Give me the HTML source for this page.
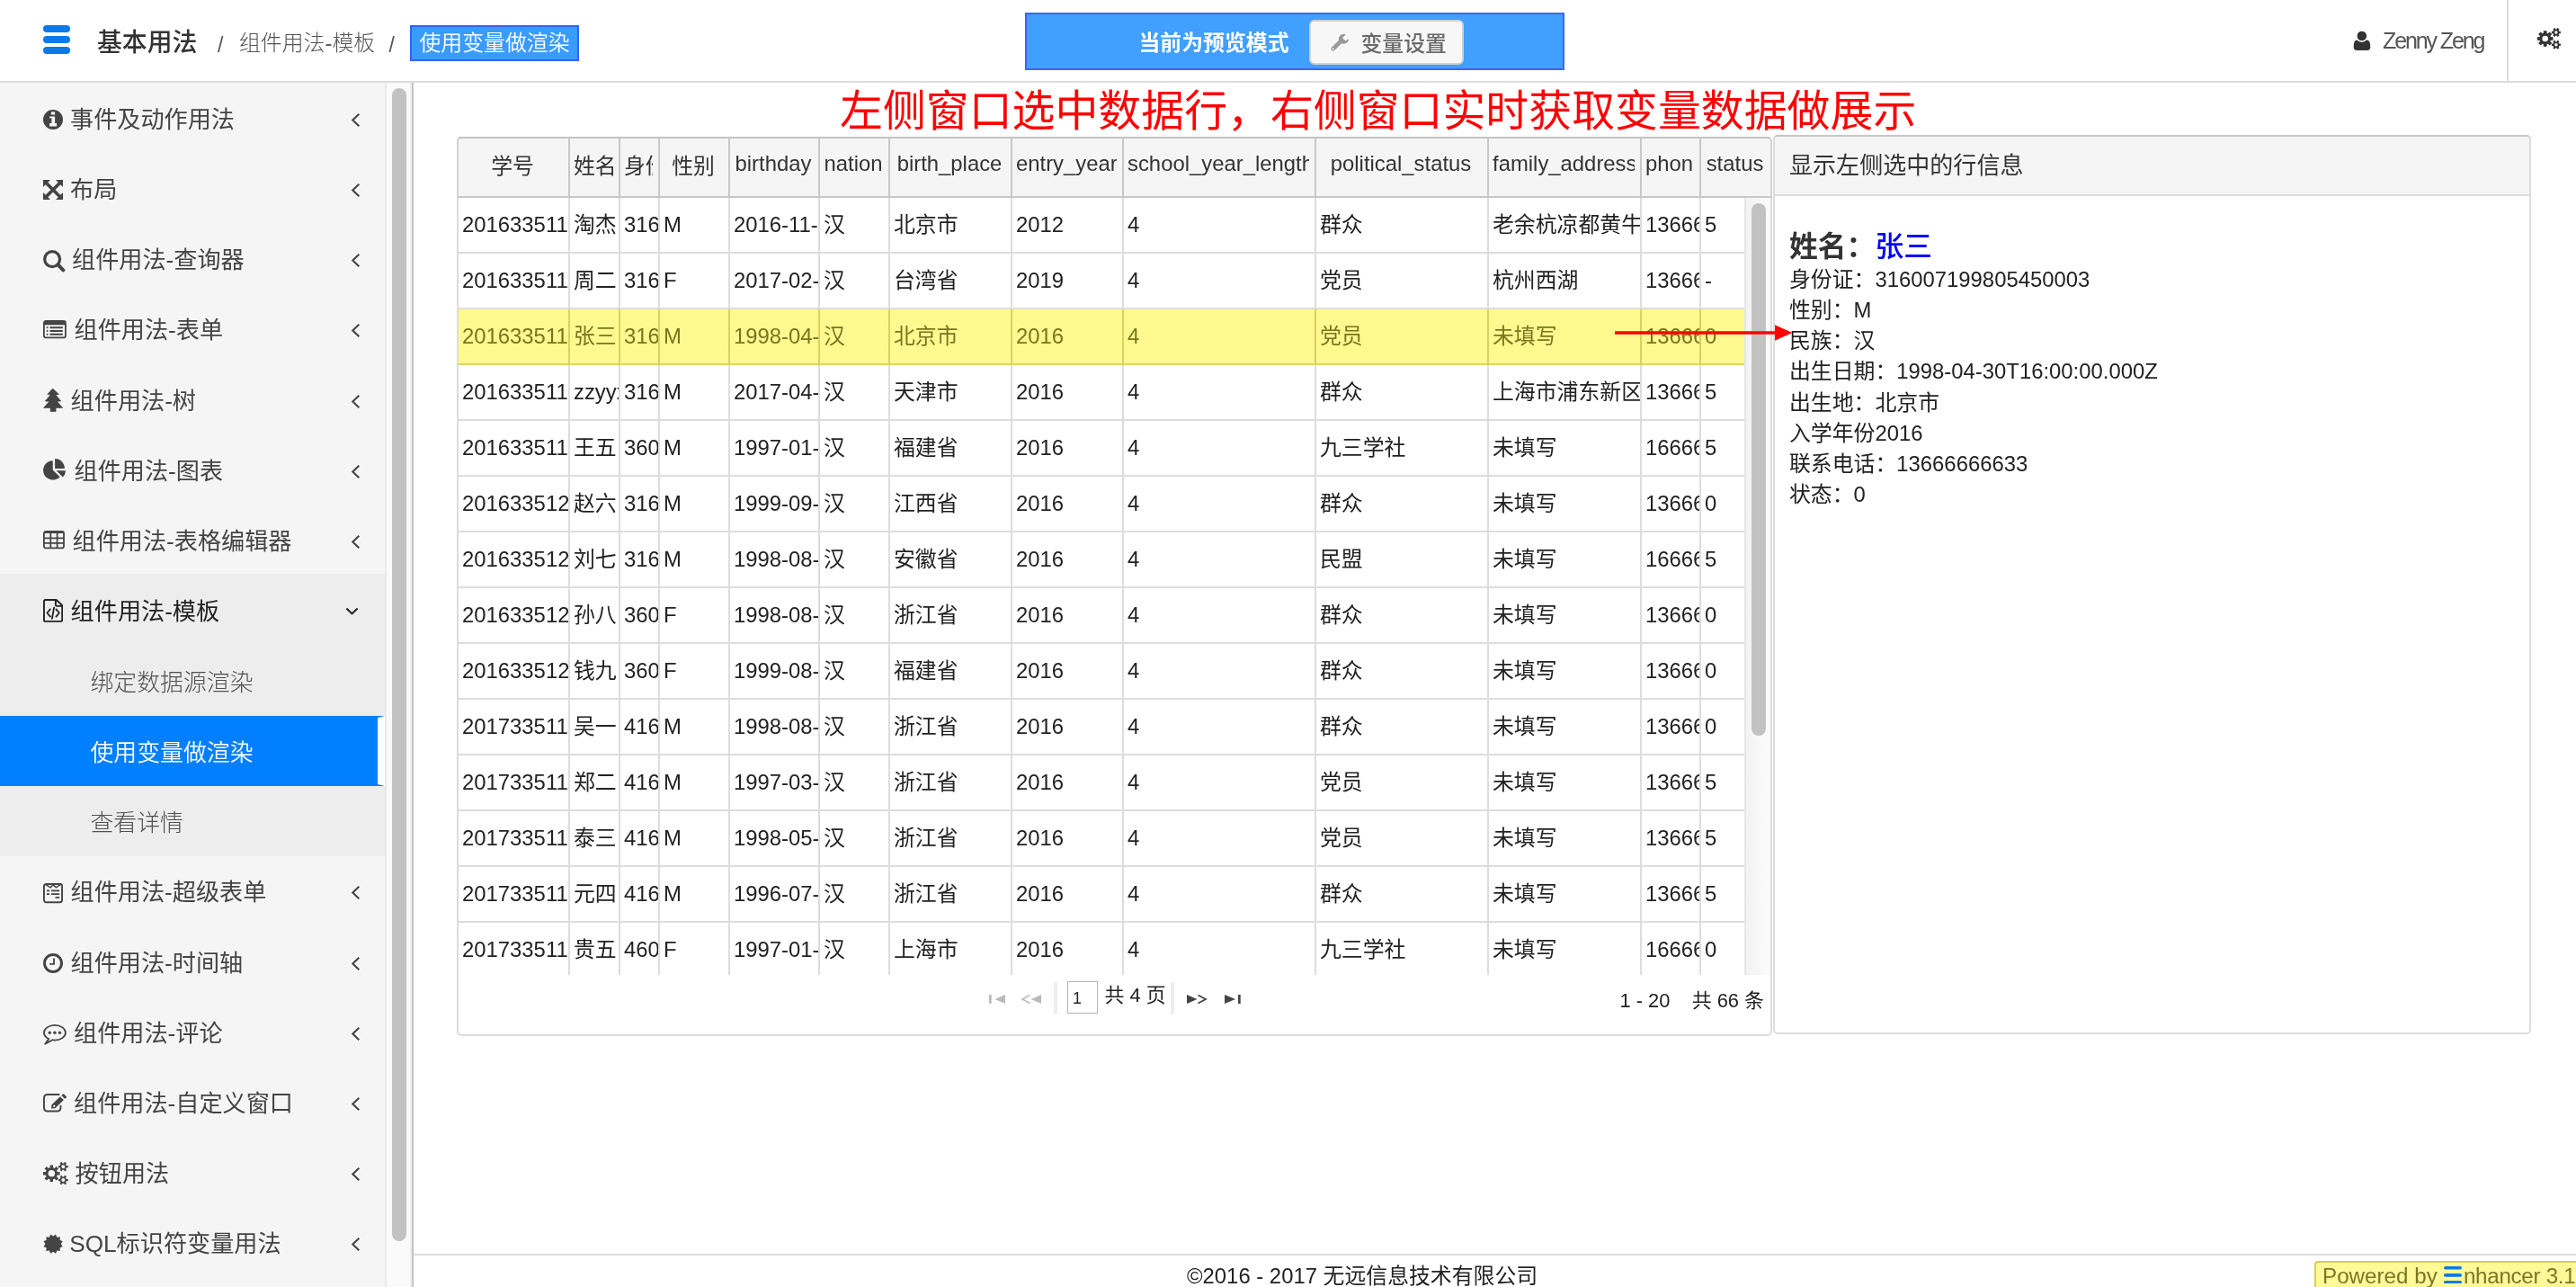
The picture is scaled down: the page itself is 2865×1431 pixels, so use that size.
<!DOCTYPE html>
<html lang="zh-CN"><head><meta charset="utf-8"><title>使用变量做渲染</title>
<style>
*{box-sizing:border-box}
html,body{margin:0;padding:0}
html{width:2865px;height:1431px;overflow:hidden}
body{width:2865px;height:1431px;overflow:hidden;background:#fff;position:relative;will-change:transform;font-family:"Liberation Sans","Noto Sans CJK SC",sans-serif;font-size:23.87px;color:#333}
div,span,i,svg{position:absolute}
i{display:block}
/* header */
#hd{left:0;top:0;width:2865px;height:92px;border-bottom:2px solid #dcdcdc;background:#fff}
.bar{left:48px;width:30px;height:8px;border-radius:4px;background:#0b7ae6}
#t1{left:108px;top:27.5px;height:40px;line-height:40px;font-size:27.85px;font-weight:500;color:#333;white-space:nowrap}
.sl{top:29.5px;height:40px;line-height:40px;color:#555;font-size:23px}
#t2{left:266px;top:28px;height:40px;line-height:40px;font-weight:300;color:#555;white-space:nowrap}
#t3{left:456px;top:28px;width:188px;height:40px;line-height:36px;border:2px solid #3560fd;background:#3a9bff;color:#fff;text-align:center;font-weight:350;white-space:nowrap}
#t3 span{position:static}
#pv{left:1140px;top:14px;width:600px;height:64px;border:2px solid #3a66fb;background:#409fff}
#pvt{left:124.5px;top:12px;height:40px;line-height:40px;font-weight:700;color:#fff;white-space:nowrap}
#pvb{left:314px;top:6px;width:172px;height:50px;border:2px solid #cfcfcf;border-radius:6px;background:#f7f7f7}
#pvb span{left:55.5px;top:4.5px;height:40px;line-height:40px;color:#6a6a6a;font-weight:500;white-space:nowrap}
#un{left:2650px;top:24.5px;height:40px;line-height:40px;font-size:25px;letter-spacing:-2.1px;color:#555;white-space:nowrap}
#dv{left:2788px;top:0;width:2px;height:90px;background:#ddd}
/* sidebar */
#sb{left:0;top:92px;width:428px;height:1339px;background:#f5f5f5;overflow:hidden}
#sbl{left:428px;top:92px;width:2px;height:1339px;background:#e9e9e9}
#trk{left:430px;top:92px;width:28px;height:1339px;background:#fafafa;border-right:2px solid #eee}
#thm{left:436px;top:98px;width:16px;height:1282px;border-radius:8px;background:#c1c2c1}
#sbb{left:458px;top:92px;width:2px;height:1339px;background:#c4c4c4}
.mi{left:0;width:428px;height:78.2px}
.ic{left:48px}
.mt{top:20px;height:40px;line-height:40px;font-size:26.15px;margin-left:-1px;color:#444;white-space:nowrap}
.act .mt{color:#222}
.chev{left:390px}
#subbg{left:0;top:545.8px;width:428px;height:314px;background:#ededed}
.sub{left:0;width:428px;height:78.2px}
.sub span{left:100.5px;top:21px;height:40px;line-height:40px;font-size:25.86px;font-weight:300;color:#505050;white-space:nowrap}
.sub.cur{background:#007fff;border-right:8px solid #fff;border-top:2px solid #007fff;border-bottom:2px solid #007fff}
.sub.cur span{top:19px}
.sub.cur span{color:#fff;font-weight:350}
/* heading */
#h1{left:934px;top:94px;height:60px;line-height:60px;font-size:47.9px;color:#f00;white-space:nowrap}
/* table panel */
#tp{left:508px;top:152px;width:1463px;height:1000px;border:2px solid #ddd;border-top-color:#c8c8c8;border-radius:5px;background:#fff}
#thd{left:-2px;top:-2px;width:1463px;height:68px;background:#f5f5f5;border:2px solid #d4d4d4;border-top-color:#c4c4c4;border-bottom-color:#c8c8c8;border-radius:5px 5px 0 0;overflow:hidden}
.th{top:-2px;height:66px;overflow:hidden}
.th span{left:4px;right:6px;top:5px;height:50px;line-height:50px;text-align:center;white-space:nowrap;overflow:hidden;color:#333}
.th span.cj{top:8px}
.hs{top:-2px;width:2px;height:66px;background:#c8c8c8}
#tbd{left:0;top:66px;width:1430px;height:864px;overflow:hidden}
.tr{left:0;width:1430px;height:62px;border-bottom:2px solid #ddd}
.td{top:0;height:60px;line-height:60px;padding-left:4px;white-space:nowrap;overflow:hidden;color:#222}
.vs{top:0;width:2px;height:62px;background:#ddd}
.tr.sel{background:#fff98f;border-bottom-color:#ddd56a}
.tr.sel .td{color:#79751f}
.tr.sel .vs{background:#d9d160}
#vtr{left:1430px;top:66px;width:29px;height:864px;background:linear-gradient(90deg,#f2f2f2,#fcfcfc);border-left:2px solid #e6e6e6}
#vth{left:1437.5px;top:72px;width:16px;height:591.5px;border-radius:8px;background:#c1c2c1}
#pg{left:1px;top:930px;width:1459px;height:65px}
.pt{height:40px;line-height:40px;white-space:nowrap;color:#222;font-size:21.9px}
.sp{top:8px;width:4px;height:36px;background:#eee}
#pin{left:676px;top:7px;width:34px;height:36px;border:1px solid #b4b4b4;background:#fff}
#pin span{left:5px;top:3px;height:30px;line-height:30px;font-size:18px;color:#222}
/* right panel */
#rp{left:1972px;top:150px;width:843px;height:1000px;border:2px solid #ddd;border-radius:5px;background:#fff}
#rph{left:-2px;top:-2px;width:843px;height:68px;background:#f5f5f5;border:2px solid #ddd;border-top-color:#c8c8c8;border-radius:5px 5px 0 0}
#rph span{left:16px;top:7px;height:50px;line-height:50px;font-size:26.05px;color:#333;white-space:nowrap}
#nm{left:16px;top:98px;height:48px;line-height:48px;font-size:31.8px;font-weight:700;color:#333;white-space:nowrap}
#nm b{color:#00f;font-weight:500}
.ln{left:16px;height:34.1px;line-height:34.1px;white-space:nowrap;color:#222}
/* footer */
#ft{left:460px;top:1394px;width:2405px;height:37px;border-top:2px solid #ddd;background:#fff;overflow:hidden}
#cp{left:860px;top:5px;height:36px;line-height:36px;white-space:nowrap;color:#222}
#pw{left:2114px;top:6.4px;width:300px;height:40px;border:2px solid #d6cd52;border-radius:4px 0 0 0;background:#fff998;color:#7c7727;white-space:nowrap;font-size:24.2px}
#pw span{left:7px;top:0;height:29px;line-height:29px}
</style></head><body>
<div id="hd">
<i class="bar" style="top:28px"></i><i class="bar" style="top:40px"></i><i class="bar" style="top:52px"></i>
<span id="t1">基本用法</span><span class="sl" style="left:242px">/</span><span id="t2">组件用法-模板</span><span class="sl" style="left:432.5px">/</span>
<div id="t3"><span>使用变量做渲染</span></div>
<div id="pv"><span id="pvt">当前为预览模式</span>
<div id="pvb"><svg style="left:21px;top:13px" width="23" height="21" viewBox="0 0 23 21"><path d="M3.6 17.4L12.2 8.8" stroke="#999" stroke-width="4.6" stroke-linecap="round"/><path d="M17.8 1.2A5.6 5.6 0 1 0 21 6.4L17.4 8.2L14 5.2Z" fill="#999"/><circle cx="3.5" cy="17.5" r="1" fill="#f7f7f7"/></svg><span>变量设置</span></div></div>
<svg style="left:2617px;top:34px" width="20" height="23" viewBox="0 0 20 23"><circle cx="9.8" cy="6" r="5.4" fill="#333"/><path d="M0.7 18.5Q0.7 10.3 4.4 10.5Q9.8 15 15.2 10.5Q19.3 10.3 19.3 18.5Q19.3 21.9 15.5 21.9H4.5Q0.7 21.9 0.7 18.5Z" fill="#333"/><circle cx="9.8" cy="6" r="5.9" fill="none" stroke="#fff" stroke-width="1"/><circle cx="9.8" cy="6" r="4.9" fill="#333"/></svg>
<span id="un">Zenny Zeng</span><i id="dv"></i>
<svg style="left:2822px;top:31.4px" width="27" height="25" viewBox="0 0 27 25"><circle cx="8.7" cy="12" r="4.90" fill="none" stroke="#333" stroke-width="3.20"/><rect x="6.80" y="3.20" width="3.80" height="2.90" fill="#333" transform="rotate(0.0 8.7 12)"/><rect x="6.80" y="3.20" width="3.80" height="2.90" fill="#333" transform="rotate(45.0 8.7 12)"/><rect x="6.80" y="3.20" width="3.80" height="2.90" fill="#333" transform="rotate(90.0 8.7 12)"/><rect x="6.80" y="3.20" width="3.80" height="2.90" fill="#333" transform="rotate(135.0 8.7 12)"/><rect x="6.80" y="3.20" width="3.80" height="2.90" fill="#333" transform="rotate(180.0 8.7 12)"/><rect x="6.80" y="3.20" width="3.80" height="2.90" fill="#333" transform="rotate(225.0 8.7 12)"/><rect x="6.80" y="3.20" width="3.80" height="2.90" fill="#333" transform="rotate(270.0 8.7 12)"/><rect x="6.80" y="3.20" width="3.80" height="2.90" fill="#333" transform="rotate(315.0 8.7 12)"/><circle cx="20.9" cy="5" r="2.55" fill="none" stroke="#333" stroke-width="1.70"/><rect x="19.65" y="0.00" width="2.50" height="2.20" fill="#333" transform="rotate(30.0 20.9 5)"/><rect x="19.65" y="0.00" width="2.50" height="2.20" fill="#333" transform="rotate(90.0 20.9 5)"/><rect x="19.65" y="0.00" width="2.50" height="2.20" fill="#333" transform="rotate(150.0 20.9 5)"/><rect x="19.65" y="0.00" width="2.50" height="2.20" fill="#333" transform="rotate(210.0 20.9 5)"/><rect x="19.65" y="0.00" width="2.50" height="2.20" fill="#333" transform="rotate(270.0 20.9 5)"/><rect x="19.65" y="0.00" width="2.50" height="2.20" fill="#333" transform="rotate(330.0 20.9 5)"/><circle cx="20.9" cy="18.8" r="2.55" fill="none" stroke="#333" stroke-width="1.70"/><rect x="19.65" y="13.80" width="2.50" height="2.20" fill="#333" transform="rotate(30.0 20.9 18.8)"/><rect x="19.65" y="13.80" width="2.50" height="2.20" fill="#333" transform="rotate(90.0 20.9 18.8)"/><rect x="19.65" y="13.80" width="2.50" height="2.20" fill="#333" transform="rotate(150.0 20.9 18.8)"/><rect x="19.65" y="13.80" width="2.50" height="2.20" fill="#333" transform="rotate(210.0 20.9 18.8)"/><rect x="19.65" y="13.80" width="2.50" height="2.20" fill="#333" transform="rotate(270.0 20.9 18.8)"/><rect x="19.65" y="13.80" width="2.50" height="2.20" fill="#333" transform="rotate(330.0 20.9 18.8)"/></svg>
</div>
<div id="sb"><i id="subbg"></i>
<div class="mi" style="top:1.0px"><svg class="ic" style="top:28.70px" width="22" height="22" viewBox="0 0 22 22"><circle cx="11" cy="11" r="11" fill="#444"/><rect x="8.9" y="2.4" width="4.2" height="3.1" fill="#f5f5f5"/><path d="M7.1 7.4H13.1V14.9H15.1V18.4H7.1V14.9H9.4V9.3H7.1Z" fill="#f5f5f5"/></svg><span class="mt" style="left:79px">事件及动作用法</span><svg class="chev" style="top:32.0px" width="11" height="17" viewBox="0 0 11 17"><path d="M9.3 1.7L2.3 8.5L9.3 15.3" fill="none" stroke="#444" stroke-width="2.1"/></svg></div>
<div class="mi" style="top:79.12px"><svg class="ic" style="top:28.58px" width="22" height="22" viewBox="0 0 22 22"><path d="M0 0H8L0 8ZM22 0V8L14 0ZM0 22V14L8 22ZM22 22H14L22 14Z" fill="#444"/><path d="M3 3L19 19M19 3L3 19" stroke="#444" stroke-width="3.8"/></svg><span class="mt" style="left:79px">布局</span><svg class="chev" style="top:32.0px" width="11" height="17" viewBox="0 0 11 17"><path d="M9.3 1.7L2.3 8.5L9.3 15.3" fill="none" stroke="#444" stroke-width="2.1"/></svg></div>
<div class="mi" style="top:157.25px"><svg class="ic" style="top:28.45px" width="25" height="25" viewBox="0 0 25 25"><circle cx="10.1" cy="10.1" r="8.45" fill="none" stroke="#444" stroke-width="3.3"/><path d="M16.6 16.5L22.3 22.3" stroke="#444" stroke-width="4" stroke-linecap="round"/></svg><span class="mt" style="left:81px">组件用法-查询器</span><svg class="chev" style="top:32.0px" width="11" height="17" viewBox="0 0 11 17"><path d="M9.3 1.7L2.3 8.5L9.3 15.3" fill="none" stroke="#444" stroke-width="2.1"/></svg></div>
<div class="mi" style="top:235.38px"><svg class="ic" style="top:28.32px" width="26" height="21" viewBox="0 0 26 21"><rect x="0.9" y="0.9" width="24" height="18.5" rx="2.2" fill="none" stroke="#444" stroke-width="1.8"/><rect x="0.9" y="0.9" width="24" height="4.4" fill="#444"/><circle cx="4.6" cy="8.3" r="1.05" fill="#444"/><rect x="7.3" y="7.3500000000000005" width="14.7" height="1.9" rx="0.9" fill="#444"/><circle cx="4.6" cy="12.0" r="1.05" fill="#444"/><rect x="7.3" y="11.05" width="14.7" height="1.9" rx="0.9" fill="#444"/><circle cx="4.6" cy="15.7" r="1.05" fill="#444"/><rect x="7.3" y="14.75" width="14.7" height="1.9" rx="0.9" fill="#444"/></svg><span class="mt" style="left:83.5px">组件用法-表单</span><svg class="chev" style="top:32.0px" width="11" height="17" viewBox="0 0 11 17"><path d="M9.3 1.7L2.3 8.5L9.3 15.3" fill="none" stroke="#444" stroke-width="2.1"/></svg></div>
<div class="mi" style="top:313.5px"><svg class="ic" style="top:26.40px" width="22" height="26" viewBox="0 0 22 26"><path d="M10.6 0L17.5 6.5L14 7.1L19.8 13.9L15.6 14.4L21.7 21.5H14.1V25.8H8.1V21.5H0.5L6.7 14.4L2.2 13.9L8.2 7.1L4.7 6.5Z" fill="#444" stroke="#444" stroke-width="0.6" stroke-linejoin="round"/></svg><span class="mt" style="left:79.6px">组件用法-树</span><svg class="chev" style="top:32.0px" width="11" height="17" viewBox="0 0 11 17"><path d="M9.3 1.7L2.3 8.5L9.3 15.3" fill="none" stroke="#444" stroke-width="2.1"/></svg></div>
<div class="mi" style="top:391.62px"><svg class="ic" style="top:26.28px" width="26" height="25" viewBox="0 0 26 25"><path d="M10.7 2.2V12.4L18.6 20.2A10.7 10.7 0 1 1 10.7 2.2Z" fill="#444"/><path d="M13.1 10.9V0A10.8 10.8 0 0 1 23.9 10.9Z" fill="#444"/><path d="M14.6 13.2H24.9A10.3 10.3 0 0 1 21.7 20.6Z" fill="#444"/></svg><span class="mt" style="left:83.5px">组件用法-图表</span><svg class="chev" style="top:32.0px" width="11" height="17" viewBox="0 0 11 17"><path d="M9.3 1.7L2.3 8.5L9.3 15.3" fill="none" stroke="#444" stroke-width="2.1"/></svg></div>
<div class="mi" style="top:469.75px"><svg class="ic" style="top:27.95px" width="24" height="21" viewBox="0 0 24 21"><rect x="0.9" y="0.9" width="22.1" height="18.5" rx="2.2" fill="none" stroke="#444" stroke-width="1.8"/><rect x="0.9" y="0.9" width="22.1" height="2.1" fill="#444"/><path d="M8.3 2V19.5M15.6 2V19.5M1 8.3H23M1 13.8H23" stroke="#444" stroke-width="1.8"/></svg><span class="mt" style="left:81.5px">组件用法-表格编辑器</span><svg class="chev" style="top:32.0px" width="11" height="17" viewBox="0 0 11 17"><path d="M9.3 1.7L2.3 8.5L9.3 15.3" fill="none" stroke="#444" stroke-width="2.1"/></svg></div>
<div class="mi act" style="top:547.88px"><svg class="ic" style="top:26.02px" width="22" height="26" viewBox="0 0 22 26"><path d="M2.4 0.95H14.6L21.2 7V23.4Q21.2 24.9 19.7 24.9H2.4Q0.95 24.9 0.95 23.4V2.4Q0.95 0.95 2.4 0.95Z" fill="none" stroke="#222" stroke-width="1.9"/><path d="M13.9 1V6.4Q13.9 7.9 15.4 7.9H21.2" fill="none" stroke="#222" stroke-width="1.9"/><path d="M7.9 11.4L4.4 15.5L7.9 19.6M12.1 9.6L9.9 21.8M14.4 11.4L17.9 15.5L14.4 19.6" fill="none" stroke="#222" stroke-width="1.8" stroke-linecap="round" stroke-linejoin="round"/></svg><span class="mt" style="left:79.6px">组件用法-模板</span><svg class="chev" style="top:35.1px;left:384px" width="15" height="9" viewBox="0 0 15 9"><path d="M1.4 1.6L7.5 7.4L13.6 1.6" fill="none" stroke="#222" stroke-width="2.1"/></svg></div>
<div class="sub" style="top:626.00px"><span>绑定数据源渲染</span></div>
<div class="sub cur" style="top:703.8px"><span>使用变量做渲染</span></div>
<div class="sub" style="top:782.25px"><span>查看详情</span></div>
<div class="mi" style="top:860.38px"><svg class="ic" style="top:29.22px" width="22" height="23" viewBox="0 0 22 23"><rect x="0.95" y="0.95" width="20.1" height="20.3" rx="2.4" fill="none" stroke="#444" stroke-width="1.9"/><path d="M2.2 1.2L8 4.8L11.15 1.9L14.4 4.8L19.8 1.2" fill="none" stroke="#444" stroke-width="1.5"/><path d="M3.9 8.4H7.1M9 8.4H18.2M3.9 12.2H7.1M9 12.2H18.2M13.5 15.9H18.2" stroke="#444" stroke-width="1.8"/></svg><span class="mt" style="left:79.5px">组件用法-超级表单</span><svg class="chev" style="top:32.0px" width="11" height="17" viewBox="0 0 11 17"><path d="M9.3 1.7L2.3 8.5L9.3 15.3" fill="none" stroke="#444" stroke-width="2.1"/></svg></div>
<div class="mi" style="top:938.5px"><svg class="ic" style="top:29.25px" width="22" height="22" viewBox="0 0 22 22"><circle cx="11" cy="11" r="9.5" fill="none" stroke="#444" stroke-width="3"/><path d="M12 5.6V11.8H7.2" fill="none" stroke="#444" stroke-width="1.8"/></svg><span class="mt" style="left:79.5px">组件用法-时间轴</span><svg class="chev" style="top:32.0px" width="11" height="17" viewBox="0 0 11 17"><path d="M9.3 1.7L2.3 8.5L9.3 15.3" fill="none" stroke="#444" stroke-width="2.1"/></svg></div>
<div class="mi" style="top:1016.6199999999999px"><svg class="ic" style="top:30.88px" width="26" height="23" viewBox="0 0 26 23"><ellipse cx="12.9" cy="9.25" rx="12" ry="8.3" fill="none" stroke="#444" stroke-width="1.8"/><path d="M6.6 15.6L2.2 21.8L10.9 16.9" fill="#f5f5f5" stroke="#444" stroke-width="1.8" stroke-linejoin="round"/><path d="M7.3 15.6L9.6 16.6" stroke="#f5f5f5" stroke-width="2.1"/><circle cx="7.3" cy="9.25" r="1.7" fill="#444"/><circle cx="12.9" cy="9.25" r="1.7" fill="#444"/><circle cx="18.5" cy="9.25" r="1.7" fill="#444"/></svg><span class="mt" style="left:83px">组件用法-评论</span><svg class="chev" style="top:32.0px" width="11" height="17" viewBox="0 0 11 17"><path d="M9.3 1.7L2.3 8.5L9.3 15.3" fill="none" stroke="#444" stroke-width="2.1"/></svg></div>
<div class="mi" style="top:1094.75px"><svg class="ic" style="top:28.85px" width="27" height="21" viewBox="0 0 27 21"><path d="M17.6 0.95H5Q0.95 0.95 0.95 5V15.4Q0.95 19.45 5 19.45H15.4Q19.45 19.45 19.45 15.4V13.6" fill="none" stroke="#444" stroke-width="1.9" stroke-linecap="round"/><path d="M9.1 16.4L9.3 12.4L18.9 3.2L22.9 6.9L13.4 16.3Z" fill="#444"/><path d="M20.3 2L22 0.4Q22.5 0 23 0.4L25.9 3.2Q26.3 3.7 25.9 4.2L24.2 5.7Z" fill="#444"/><rect x="11.2" y="12.8" width="2" height="2" fill="#f5f5f5" transform="rotate(45 12.2 13.8)"/></svg><span class="mt" style="left:83px">组件用法-自定义窗口</span><svg class="chev" style="top:32.0px" width="11" height="17" viewBox="0 0 11 17"><path d="M9.3 1.7L2.3 8.5L9.3 15.3" fill="none" stroke="#444" stroke-width="2.1"/></svg></div>
<div class="mi" style="top:1172.88px"><svg class="ic" style="top:27.12px" width="28" height="26" viewBox="0 0 28 26"><circle cx="9.3" cy="12.8" r="5.30" fill="none" stroke="#444" stroke-width="3.00"/><rect x="7.60" y="3.50" width="3.40" height="3.10" fill="#444" transform="rotate(0.0 9.3 12.8)"/><rect x="7.60" y="3.50" width="3.40" height="3.10" fill="#444" transform="rotate(45.0 9.3 12.8)"/><rect x="7.60" y="3.50" width="3.40" height="3.10" fill="#444" transform="rotate(90.0 9.3 12.8)"/><rect x="7.60" y="3.50" width="3.40" height="3.10" fill="#444" transform="rotate(135.0 9.3 12.8)"/><rect x="7.60" y="3.50" width="3.40" height="3.10" fill="#444" transform="rotate(180.0 9.3 12.8)"/><rect x="7.60" y="3.50" width="3.40" height="3.10" fill="#444" transform="rotate(225.0 9.3 12.8)"/><rect x="7.60" y="3.50" width="3.40" height="3.10" fill="#444" transform="rotate(270.0 9.3 12.8)"/><rect x="7.60" y="3.50" width="3.40" height="3.10" fill="#444" transform="rotate(315.0 9.3 12.8)"/><circle cx="22.3" cy="5.2" r="2.80" fill="none" stroke="#444" stroke-width="1.60"/><rect x="21.15" y="-0.20" width="2.30" height="2.40" fill="#444" transform="rotate(30.0 22.3 5.2)"/><rect x="21.15" y="-0.20" width="2.30" height="2.40" fill="#444" transform="rotate(90.0 22.3 5.2)"/><rect x="21.15" y="-0.20" width="2.30" height="2.40" fill="#444" transform="rotate(150.0 22.3 5.2)"/><rect x="21.15" y="-0.20" width="2.30" height="2.40" fill="#444" transform="rotate(210.0 22.3 5.2)"/><rect x="21.15" y="-0.20" width="2.30" height="2.40" fill="#444" transform="rotate(270.0 22.3 5.2)"/><rect x="21.15" y="-0.20" width="2.30" height="2.40" fill="#444" transform="rotate(330.0 22.3 5.2)"/><circle cx="22.3" cy="20.1" r="2.80" fill="none" stroke="#444" stroke-width="1.60"/><rect x="21.15" y="14.70" width="2.30" height="2.40" fill="#444" transform="rotate(30.0 22.3 20.1)"/><rect x="21.15" y="14.70" width="2.30" height="2.40" fill="#444" transform="rotate(90.0 22.3 20.1)"/><rect x="21.15" y="14.70" width="2.30" height="2.40" fill="#444" transform="rotate(150.0 22.3 20.1)"/><rect x="21.15" y="14.70" width="2.30" height="2.40" fill="#444" transform="rotate(210.0 22.3 20.1)"/><rect x="21.15" y="14.70" width="2.30" height="2.40" fill="#444" transform="rotate(270.0 22.3 20.1)"/><rect x="21.15" y="14.70" width="2.30" height="2.40" fill="#444" transform="rotate(330.0 22.3 20.1)"/></svg><span class="mt" style="left:84.6px">按钮用法</span><svg class="chev" style="top:32.0px" width="11" height="17" viewBox="0 0 11 17"><path d="M9.3 1.7L2.3 8.5L9.3 15.3" fill="none" stroke="#444" stroke-width="2.1"/></svg></div>
<div class="mi" style="top:1251.0px"><svg class="ic" style="top:28.70px" width="23" height="23" viewBox="0 0 23 23"><polygon points="13.95,0.47 15.40,3.65 18.88,3.32 18.55,6.80 21.73,8.25 19.70,11.10 21.73,13.95 18.55,15.40 18.88,18.88 15.40,18.55 13.95,21.73 11.10,19.70 8.25,21.73 6.80,18.55 3.32,18.88 3.65,15.40 0.47,13.95 2.50,11.10 0.47,8.25 3.65,6.80 3.32,3.32 6.80,3.65 8.25,0.47 11.10,2.50" fill="#444"/></svg><span class="mt" style="left:78.3px">SQL标识符变量用法</span><svg class="chev" style="top:32.0px" width="11" height="17" viewBox="0 0 11 17"><path d="M9.3 1.7L2.3 8.5L9.3 15.3" fill="none" stroke="#444" stroke-width="2.1"/></svg></div>
</div>
<i id="sbl"></i><i id="trk"></i><i id="thm"></i><i id="sbb"></i>
<div id="h1">左侧窗口选中数据行，右侧窗口实时获取变量数据做展示</div>
<div id="tp">
<div id="thd"><div class="th" style="left:0px;width:122px"><span class="cj">学号</span></div><div class="th" style="left:124px;width:54px"><span class="cj">姓名</span></div><div class="th" style="left:180px;width:42px"><span class="cj">身份证号</span></div><div class="th" style="left:224px;width:76px"><span class="cj">性别</span></div><div class="th" style="left:302px;width:98px"><span>birthday</span></div><div class="th" style="left:402px;width:76px"><span>nation</span></div><div class="th" style="left:480px;width:134px"><span>birth_place</span></div><div class="th" style="left:616px;width:122px"><span>entry_year</span></div><div class="th" style="left:740px;width:212px"><span>school_year_length</span></div><div class="th" style="left:954px;width:190px"><span>political_status</span></div><div class="th" style="left:1146px;width:168px"><span>family_address</span></div><div class="th" style="left:1316px;width:64px"><span>phone</span></div><div class="th" style="left:1382px;width:77px"><span>status</span></div><i class="hs" style="left:122px"></i><i class="hs" style="left:178px"></i><i class="hs" style="left:222px"></i><i class="hs" style="left:300px"></i><i class="hs" style="left:400px"></i><i class="hs" style="left:478px"></i><i class="hs" style="left:614px"></i><i class="hs" style="left:738px"></i><i class="hs" style="left:952px"></i><i class="hs" style="left:1144px"></i><i class="hs" style="left:1314px"></i><i class="hs" style="left:1380px"></i></div>
<div id="tbd"><div class="tr" style="top:0px"><div class="td" style="left:0px;width:122px">2016335110</div><div class="td" style="left:124px;width:54px">淘杰</div><div class="td" style="left:180px;width:42px">316007199805450001</div><div class="td" style="left:224px;width:76px">M</div><div class="td" style="left:302px;width:98px">2016-11-29T16:00</div><div class="td" style="left:402px;width:76px">汉</div><div class="td" style="left:480px;width:134px">北京市</div><div class="td" style="left:616px;width:122px">2012</div><div class="td" style="left:740px;width:212px">4</div><div class="td" style="left:954px;width:190px">群众</div><div class="td" style="left:1146px;width:168px">老余杭凉都黄牛肉</div><div class="td" style="left:1316px;width:64px">13666666631</div><div class="td" style="left:1382px;width:48px">5</div><i class="vs" style="left:122px"></i><i class="vs" style="left:178px"></i><i class="vs" style="left:222px"></i><i class="vs" style="left:300px"></i><i class="vs" style="left:400px"></i><i class="vs" style="left:478px"></i><i class="vs" style="left:614px"></i><i class="vs" style="left:738px"></i><i class="vs" style="left:952px"></i><i class="vs" style="left:1144px"></i><i class="vs" style="left:1314px"></i><i class="vs" style="left:1380px"></i></div><div class="tr" style="top:62px"><div class="td" style="left:0px;width:122px">2016335111</div><div class="td" style="left:124px;width:54px">周二</div><div class="td" style="left:180px;width:42px">316007199805450002</div><div class="td" style="left:224px;width:76px">F</div><div class="td" style="left:302px;width:98px">2017-02-19T16:00</div><div class="td" style="left:402px;width:76px">汉</div><div class="td" style="left:480px;width:134px">台湾省</div><div class="td" style="left:616px;width:122px">2019</div><div class="td" style="left:740px;width:212px">4</div><div class="td" style="left:954px;width:190px">党员</div><div class="td" style="left:1146px;width:168px">杭州西湖</div><div class="td" style="left:1316px;width:64px">13666666632</div><div class="td" style="left:1382px;width:48px">-</div><i class="vs" style="left:122px"></i><i class="vs" style="left:178px"></i><i class="vs" style="left:222px"></i><i class="vs" style="left:300px"></i><i class="vs" style="left:400px"></i><i class="vs" style="left:478px"></i><i class="vs" style="left:614px"></i><i class="vs" style="left:738px"></i><i class="vs" style="left:952px"></i><i class="vs" style="left:1144px"></i><i class="vs" style="left:1314px"></i><i class="vs" style="left:1380px"></i></div><div class="tr sel" style="top:124px"><div class="td" style="left:0px;width:122px">2016335112</div><div class="td" style="left:124px;width:54px">张三</div><div class="td" style="left:180px;width:42px">316007199805450003</div><div class="td" style="left:224px;width:76px">M</div><div class="td" style="left:302px;width:98px">1998-04-30T16:00</div><div class="td" style="left:402px;width:76px">汉</div><div class="td" style="left:480px;width:134px">北京市</div><div class="td" style="left:616px;width:122px">2016</div><div class="td" style="left:740px;width:212px">4</div><div class="td" style="left:954px;width:190px">党员</div><div class="td" style="left:1146px;width:168px">未填写</div><div class="td" style="left:1316px;width:64px">13666666633</div><div class="td" style="left:1382px;width:48px">0</div><i class="vs" style="left:122px"></i><i class="vs" style="left:178px"></i><i class="vs" style="left:222px"></i><i class="vs" style="left:300px"></i><i class="vs" style="left:400px"></i><i class="vs" style="left:478px"></i><i class="vs" style="left:614px"></i><i class="vs" style="left:738px"></i><i class="vs" style="left:952px"></i><i class="vs" style="left:1144px"></i><i class="vs" style="left:1314px"></i><i class="vs" style="left:1380px"></i></div><div class="tr" style="top:186px"><div class="td" style="left:0px;width:122px">2016335113</div><div class="td" style="left:124px;width:54px">zzyyx</div><div class="td" style="left:180px;width:42px">316007199805450004</div><div class="td" style="left:224px;width:76px">M</div><div class="td" style="left:302px;width:98px">2017-04-04T16:00</div><div class="td" style="left:402px;width:76px">汉</div><div class="td" style="left:480px;width:134px">天津市</div><div class="td" style="left:616px;width:122px">2016</div><div class="td" style="left:740px;width:212px">4</div><div class="td" style="left:954px;width:190px">群众</div><div class="td" style="left:1146px;width:168px">上海市浦东新区上</div><div class="td" style="left:1316px;width:64px">13666666634</div><div class="td" style="left:1382px;width:48px">5</div><i class="vs" style="left:122px"></i><i class="vs" style="left:178px"></i><i class="vs" style="left:222px"></i><i class="vs" style="left:300px"></i><i class="vs" style="left:400px"></i><i class="vs" style="left:478px"></i><i class="vs" style="left:614px"></i><i class="vs" style="left:738px"></i><i class="vs" style="left:952px"></i><i class="vs" style="left:1144px"></i><i class="vs" style="left:1314px"></i><i class="vs" style="left:1380px"></i></div><div class="tr" style="top:248px"><div class="td" style="left:0px;width:122px">2016335114</div><div class="td" style="left:124px;width:54px">王五</div><div class="td" style="left:180px;width:42px">360007199805450005</div><div class="td" style="left:224px;width:76px">M</div><div class="td" style="left:302px;width:98px">1997-01-30T16:00</div><div class="td" style="left:402px;width:76px">汉</div><div class="td" style="left:480px;width:134px">福建省</div><div class="td" style="left:616px;width:122px">2016</div><div class="td" style="left:740px;width:212px">4</div><div class="td" style="left:954px;width:190px">九三学社</div><div class="td" style="left:1146px;width:168px">未填写</div><div class="td" style="left:1316px;width:64px">16666666635</div><div class="td" style="left:1382px;width:48px">5</div><i class="vs" style="left:122px"></i><i class="vs" style="left:178px"></i><i class="vs" style="left:222px"></i><i class="vs" style="left:300px"></i><i class="vs" style="left:400px"></i><i class="vs" style="left:478px"></i><i class="vs" style="left:614px"></i><i class="vs" style="left:738px"></i><i class="vs" style="left:952px"></i><i class="vs" style="left:1144px"></i><i class="vs" style="left:1314px"></i><i class="vs" style="left:1380px"></i></div><div class="tr" style="top:310px"><div class="td" style="left:0px;width:122px">2016335120</div><div class="td" style="left:124px;width:54px">赵六</div><div class="td" style="left:180px;width:42px">316007199805450006</div><div class="td" style="left:224px;width:76px">M</div><div class="td" style="left:302px;width:98px">1999-09-30T16:00</div><div class="td" style="left:402px;width:76px">汉</div><div class="td" style="left:480px;width:134px">江西省</div><div class="td" style="left:616px;width:122px">2016</div><div class="td" style="left:740px;width:212px">4</div><div class="td" style="left:954px;width:190px">群众</div><div class="td" style="left:1146px;width:168px">未填写</div><div class="td" style="left:1316px;width:64px">13666666636</div><div class="td" style="left:1382px;width:48px">0</div><i class="vs" style="left:122px"></i><i class="vs" style="left:178px"></i><i class="vs" style="left:222px"></i><i class="vs" style="left:300px"></i><i class="vs" style="left:400px"></i><i class="vs" style="left:478px"></i><i class="vs" style="left:614px"></i><i class="vs" style="left:738px"></i><i class="vs" style="left:952px"></i><i class="vs" style="left:1144px"></i><i class="vs" style="left:1314px"></i><i class="vs" style="left:1380px"></i></div><div class="tr" style="top:372px"><div class="td" style="left:0px;width:122px">2016335121</div><div class="td" style="left:124px;width:54px">刘七</div><div class="td" style="left:180px;width:42px">316007199805450007</div><div class="td" style="left:224px;width:76px">M</div><div class="td" style="left:302px;width:98px">1998-08-30T16:00</div><div class="td" style="left:402px;width:76px">汉</div><div class="td" style="left:480px;width:134px">安徽省</div><div class="td" style="left:616px;width:122px">2016</div><div class="td" style="left:740px;width:212px">4</div><div class="td" style="left:954px;width:190px">民盟</div><div class="td" style="left:1146px;width:168px">未填写</div><div class="td" style="left:1316px;width:64px">16666666637</div><div class="td" style="left:1382px;width:48px">5</div><i class="vs" style="left:122px"></i><i class="vs" style="left:178px"></i><i class="vs" style="left:222px"></i><i class="vs" style="left:300px"></i><i class="vs" style="left:400px"></i><i class="vs" style="left:478px"></i><i class="vs" style="left:614px"></i><i class="vs" style="left:738px"></i><i class="vs" style="left:952px"></i><i class="vs" style="left:1144px"></i><i class="vs" style="left:1314px"></i><i class="vs" style="left:1380px"></i></div><div class="tr" style="top:434px"><div class="td" style="left:0px;width:122px">2016335122</div><div class="td" style="left:124px;width:54px">孙八</div><div class="td" style="left:180px;width:42px">360007199805450008</div><div class="td" style="left:224px;width:76px">F</div><div class="td" style="left:302px;width:98px">1998-08-30T16:00</div><div class="td" style="left:402px;width:76px">汉</div><div class="td" style="left:480px;width:134px">浙江省</div><div class="td" style="left:616px;width:122px">2016</div><div class="td" style="left:740px;width:212px">4</div><div class="td" style="left:954px;width:190px">群众</div><div class="td" style="left:1146px;width:168px">未填写</div><div class="td" style="left:1316px;width:64px">13666666638</div><div class="td" style="left:1382px;width:48px">0</div><i class="vs" style="left:122px"></i><i class="vs" style="left:178px"></i><i class="vs" style="left:222px"></i><i class="vs" style="left:300px"></i><i class="vs" style="left:400px"></i><i class="vs" style="left:478px"></i><i class="vs" style="left:614px"></i><i class="vs" style="left:738px"></i><i class="vs" style="left:952px"></i><i class="vs" style="left:1144px"></i><i class="vs" style="left:1314px"></i><i class="vs" style="left:1380px"></i></div><div class="tr" style="top:496px"><div class="td" style="left:0px;width:122px">2016335123</div><div class="td" style="left:124px;width:54px">钱九</div><div class="td" style="left:180px;width:42px">360007199805450009</div><div class="td" style="left:224px;width:76px">F</div><div class="td" style="left:302px;width:98px">1999-08-30T16:00</div><div class="td" style="left:402px;width:76px">汉</div><div class="td" style="left:480px;width:134px">福建省</div><div class="td" style="left:616px;width:122px">2016</div><div class="td" style="left:740px;width:212px">4</div><div class="td" style="left:954px;width:190px">群众</div><div class="td" style="left:1146px;width:168px">未填写</div><div class="td" style="left:1316px;width:64px">13666666639</div><div class="td" style="left:1382px;width:48px">0</div><i class="vs" style="left:122px"></i><i class="vs" style="left:178px"></i><i class="vs" style="left:222px"></i><i class="vs" style="left:300px"></i><i class="vs" style="left:400px"></i><i class="vs" style="left:478px"></i><i class="vs" style="left:614px"></i><i class="vs" style="left:738px"></i><i class="vs" style="left:952px"></i><i class="vs" style="left:1144px"></i><i class="vs" style="left:1314px"></i><i class="vs" style="left:1380px"></i></div><div class="tr" style="top:558px"><div class="td" style="left:0px;width:122px">2017335110</div><div class="td" style="left:124px;width:54px">吴一</div><div class="td" style="left:180px;width:42px">416007199805450010</div><div class="td" style="left:224px;width:76px">M</div><div class="td" style="left:302px;width:98px">1998-08-30T16:00</div><div class="td" style="left:402px;width:76px">汉</div><div class="td" style="left:480px;width:134px">浙江省</div><div class="td" style="left:616px;width:122px">2016</div><div class="td" style="left:740px;width:212px">4</div><div class="td" style="left:954px;width:190px">群众</div><div class="td" style="left:1146px;width:168px">未填写</div><div class="td" style="left:1316px;width:64px">13666666640</div><div class="td" style="left:1382px;width:48px">0</div><i class="vs" style="left:122px"></i><i class="vs" style="left:178px"></i><i class="vs" style="left:222px"></i><i class="vs" style="left:300px"></i><i class="vs" style="left:400px"></i><i class="vs" style="left:478px"></i><i class="vs" style="left:614px"></i><i class="vs" style="left:738px"></i><i class="vs" style="left:952px"></i><i class="vs" style="left:1144px"></i><i class="vs" style="left:1314px"></i><i class="vs" style="left:1380px"></i></div><div class="tr" style="top:620px"><div class="td" style="left:0px;width:122px">2017335111</div><div class="td" style="left:124px;width:54px">郑二</div><div class="td" style="left:180px;width:42px">416007199805450011</div><div class="td" style="left:224px;width:76px">M</div><div class="td" style="left:302px;width:98px">1997-03-30T16:00</div><div class="td" style="left:402px;width:76px">汉</div><div class="td" style="left:480px;width:134px">浙江省</div><div class="td" style="left:616px;width:122px">2016</div><div class="td" style="left:740px;width:212px">4</div><div class="td" style="left:954px;width:190px">党员</div><div class="td" style="left:1146px;width:168px">未填写</div><div class="td" style="left:1316px;width:64px">13666666641</div><div class="td" style="left:1382px;width:48px">5</div><i class="vs" style="left:122px"></i><i class="vs" style="left:178px"></i><i class="vs" style="left:222px"></i><i class="vs" style="left:300px"></i><i class="vs" style="left:400px"></i><i class="vs" style="left:478px"></i><i class="vs" style="left:614px"></i><i class="vs" style="left:738px"></i><i class="vs" style="left:952px"></i><i class="vs" style="left:1144px"></i><i class="vs" style="left:1314px"></i><i class="vs" style="left:1380px"></i></div><div class="tr" style="top:682px"><div class="td" style="left:0px;width:122px">2017335112</div><div class="td" style="left:124px;width:54px">泰三</div><div class="td" style="left:180px;width:42px">416007199805450012</div><div class="td" style="left:224px;width:76px">M</div><div class="td" style="left:302px;width:98px">1998-05-30T16:00</div><div class="td" style="left:402px;width:76px">汉</div><div class="td" style="left:480px;width:134px">浙江省</div><div class="td" style="left:616px;width:122px">2016</div><div class="td" style="left:740px;width:212px">4</div><div class="td" style="left:954px;width:190px">党员</div><div class="td" style="left:1146px;width:168px">未填写</div><div class="td" style="left:1316px;width:64px">13666666642</div><div class="td" style="left:1382px;width:48px">5</div><i class="vs" style="left:122px"></i><i class="vs" style="left:178px"></i><i class="vs" style="left:222px"></i><i class="vs" style="left:300px"></i><i class="vs" style="left:400px"></i><i class="vs" style="left:478px"></i><i class="vs" style="left:614px"></i><i class="vs" style="left:738px"></i><i class="vs" style="left:952px"></i><i class="vs" style="left:1144px"></i><i class="vs" style="left:1314px"></i><i class="vs" style="left:1380px"></i></div><div class="tr" style="top:744px"><div class="td" style="left:0px;width:122px">2017335113</div><div class="td" style="left:124px;width:54px">元四</div><div class="td" style="left:180px;width:42px">416007199805450013</div><div class="td" style="left:224px;width:76px">M</div><div class="td" style="left:302px;width:98px">1996-07-30T16:00</div><div class="td" style="left:402px;width:76px">汉</div><div class="td" style="left:480px;width:134px">浙江省</div><div class="td" style="left:616px;width:122px">2016</div><div class="td" style="left:740px;width:212px">4</div><div class="td" style="left:954px;width:190px">群众</div><div class="td" style="left:1146px;width:168px">未填写</div><div class="td" style="left:1316px;width:64px">13666666643</div><div class="td" style="left:1382px;width:48px">5</div><i class="vs" style="left:122px"></i><i class="vs" style="left:178px"></i><i class="vs" style="left:222px"></i><i class="vs" style="left:300px"></i><i class="vs" style="left:400px"></i><i class="vs" style="left:478px"></i><i class="vs" style="left:614px"></i><i class="vs" style="left:738px"></i><i class="vs" style="left:952px"></i><i class="vs" style="left:1144px"></i><i class="vs" style="left:1314px"></i><i class="vs" style="left:1380px"></i></div><div class="tr" style="top:806px"><div class="td" style="left:0px;width:122px">2017335114</div><div class="td" style="left:124px;width:54px">贵五</div><div class="td" style="left:180px;width:42px">460007199805450014</div><div class="td" style="left:224px;width:76px">F</div><div class="td" style="left:302px;width:98px">1997-01-30T16:00</div><div class="td" style="left:402px;width:76px">汉</div><div class="td" style="left:480px;width:134px">上海市</div><div class="td" style="left:616px;width:122px">2016</div><div class="td" style="left:740px;width:212px">4</div><div class="td" style="left:954px;width:190px">九三学社</div><div class="td" style="left:1146px;width:168px">未填写</div><div class="td" style="left:1316px;width:64px">16666666644</div><div class="td" style="left:1382px;width:48px">0</div><i class="vs" style="left:122px"></i><i class="vs" style="left:178px"></i><i class="vs" style="left:222px"></i><i class="vs" style="left:300px"></i><i class="vs" style="left:400px"></i><i class="vs" style="left:478px"></i><i class="vs" style="left:614px"></i><i class="vs" style="left:738px"></i><i class="vs" style="left:952px"></i><i class="vs" style="left:1144px"></i><i class="vs" style="left:1314px"></i><i class="vs" style="left:1380px"></i></div></div>
<i id="vtr"></i><i id="vth"></i>
<div id="pg">
<svg style="left:588px;top:21px" width="22" height="12" viewBox="0 0 22 12"><rect x="0.9" y="1" width="2.8" height="10" fill="#bbb"/><path d="M19 1V11L7.3 6Z" fill="#bbb"/></svg>
<svg style="left:624px;top:21px" width="24" height="12" viewBox="0 0 24 12"><path d="M10.5 1.5L2 6L10.5 10.5" fill="none" stroke="#bbb" stroke-width="1.6"/><path d="M23 1V11L11.5 6Z" fill="#bbb"/></svg>
<i class="sp" style="left:661px"></i>
<div id="pin"><span>1</span></div>
<span class="pt" style="left:717.5px;top:2.5px">共 4 页</span>
<i class="sp" style="left:791px"></i>
<svg style="left:808px;top:21px" width="24" height="12" viewBox="0 0 24 12"><path d="M1 1V11L12.5 6Z" fill="#444"/><path d="M13.5 1.5L22 6L13.5 10.5" fill="none" stroke="#444" stroke-width="1.8"/></svg>
<svg style="left:850px;top:21px" width="22" height="12" viewBox="0 0 22 12"><path d="M1 1V11L13 6Z" fill="#444"/><rect x="16" y="1" width="2.7" height="10" fill="#444"/></svg>
<span class="pt" style="right:8px;top:9px">1 - 20&nbsp;&nbsp;&nbsp;&nbsp;共 66 条</span>
</div>
</div>
<div id="rp"><div id="rph"><span>显示左侧选中的行信息</span></div>
<div id="nm">姓名：<b>张三</b></div>
<div class="ln" style="top:142.1px">身份证：316007199805450003</div>
<div class="ln" style="top:176.2px">性别：M</div>
<div class="ln" style="top:210.3px">民族：汉</div>
<div class="ln" style="top:244.4px">出生日期：1998-04-30T16:00:00.000Z</div>
<div class="ln" style="top:278.5px">出生地：北京市</div>
<div class="ln" style="top:312.6px">入学年份2016</div>
<div class="ln" style="top:346.7px">联系电话：13666666633</div>
<div class="ln" style="top:380.8px">状态：0</div>
</div>
<svg style="left:1790px;top:355px" width="210" height="30" viewBox="0 0 210 30"><path d="M6 15H186" stroke="#f00" stroke-width="3.6"/><path d="M184 6.2L203.5 15L184 23.8Z" fill="#f00"/></svg>
<div id="ft"><span id="cp">©2016 - 2017 无远信息技术有限公司</span>
<div id="pw"><span>Powered by <svg style="position:relative;display:inline-block;vertical-align:0;margin:0 1.5px 0 1px" width="20" height="19.6" viewBox="0 0 20 19.6"><rect x="0" y="0" width="20" height="3.6" rx="1.8" fill="#0b7ae6"/><rect x="0" y="8.1" width="20" height="3.6" rx="1.8" fill="#0b7ae6"/><rect x="0" y="16" width="20" height="3.6" rx="1.8" fill="#0b7ae6"/></svg><b style="font-weight:400;letter-spacing:-0.3px">nhancer 3.1</b></span></div>
</div>
</body></html>
